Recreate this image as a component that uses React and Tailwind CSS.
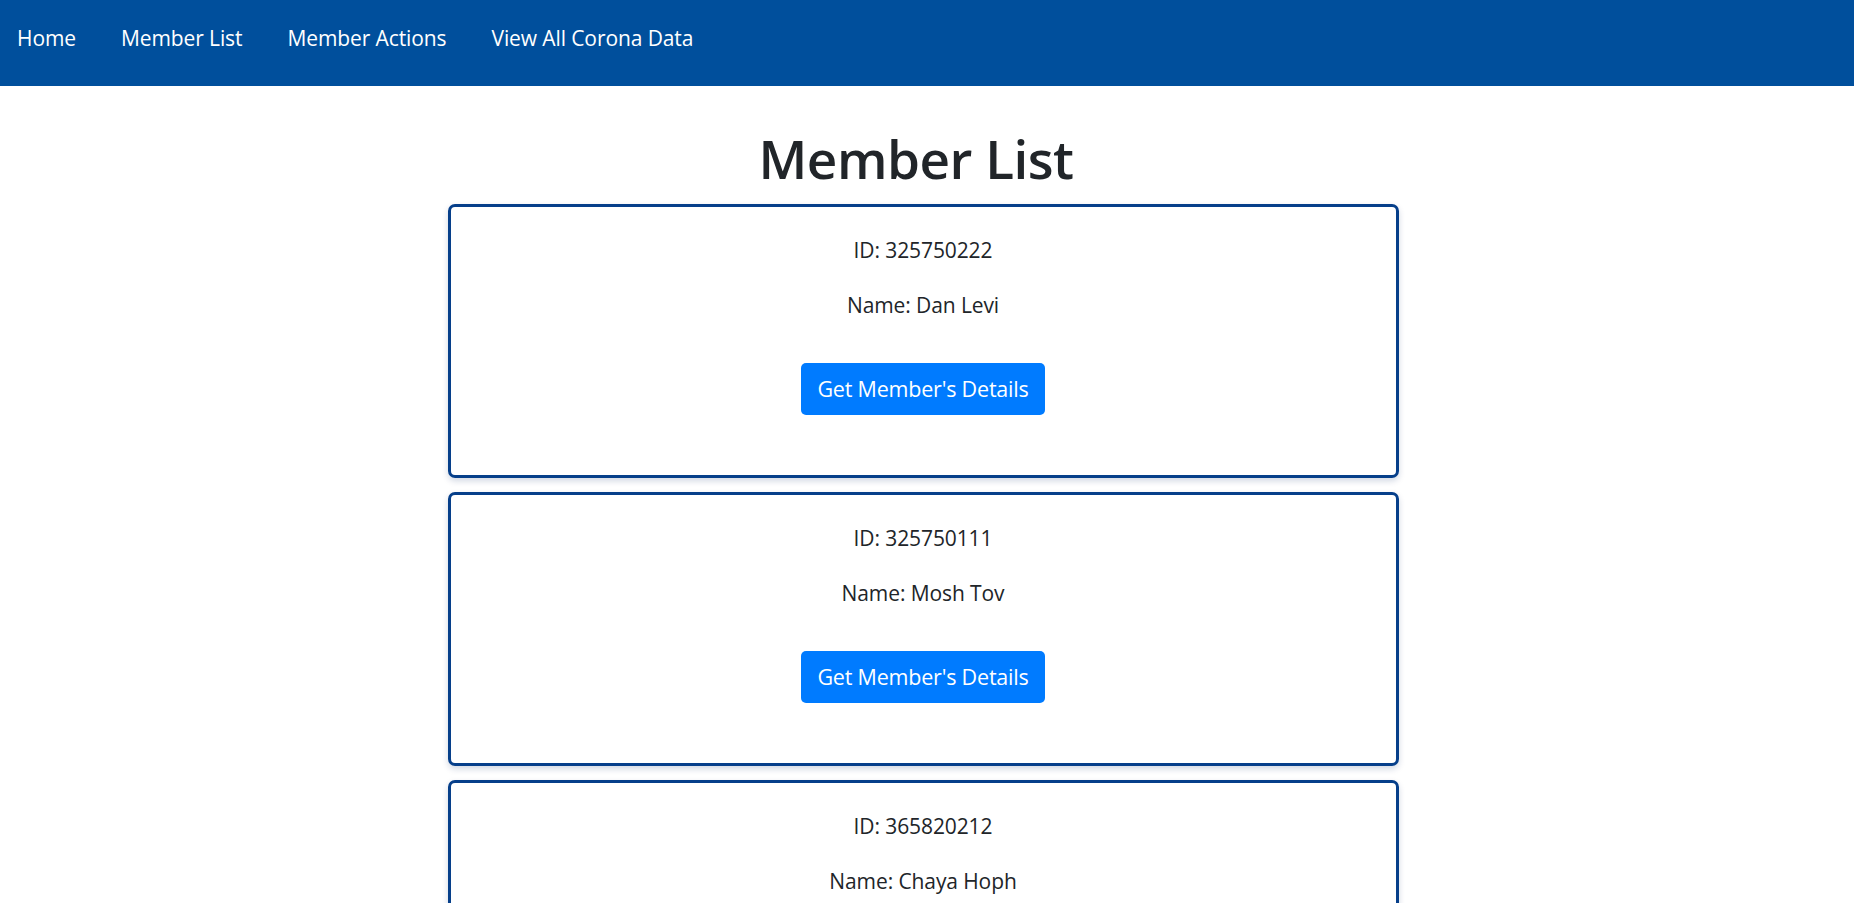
const members = [
  { id: '325750222', name: 'Dan Levi' },
  { id: '325750111', name: 'Mosh Tov' },
  { id: '365820212', name: 'Chaya Hoph' },
];

const navLinks = ['Home', 'Member List', 'Member Actions', 'View All Corona Data'];

export default function App() {
  return (
    <div className="min-h-screen bg-white text-[#212529] font-['Open_Sans',sans-serif]">
      {/* ── Navbar ─────────────────────────── */}
      <nav className="h-[86px] bg-[#004f9c] flex items-start pt-[22px] pl-[17px] gap-[45px]">
        {navLinks.map((link) => (
          <a key={link} href="#" className="text-white text-[21px] leading-8 tracking-[-0.1px]">
            {link}
          </a>
        ))}
      </nav>

      <h1 className="text-center text-[53px] font-semibold leading-[69px] mt-[38px] mb-[11px] pr-[22px] tracking-[-0.5px]">
        Member List
      </h1>

      <div className="w-[951px] mx-auto flex flex-col gap-[14px] pr-[8px] box-content">
        {members.map((m) => (
          <MemberCard key={m.id} member={m} />
        ))}
      </div>
    </div>
  );
}

function MemberCard({ member }) {
  return (
    <div className="h-[274px] border-[3px] border-[#063f8a] rounded-[7px] shadow-[0_3px_6px_rgba(0,40,100,0.18)] flex flex-col items-center pt-[27px] text-[21px] tracking-[-0.1px]">
      <p className="leading-8">ID: {member.id}</p>
      <p className="leading-8 mt-[23px]">Name: {member.name}</p>
      <button className="mt-[42px] h-[52px] px-[16px] rounded-[5px] bg-[#007bff] text-white text-[21.5px] leading-8 tracking-[-0.2px]">
        Get Member's Details
      </button>
    </div>
  );
}
